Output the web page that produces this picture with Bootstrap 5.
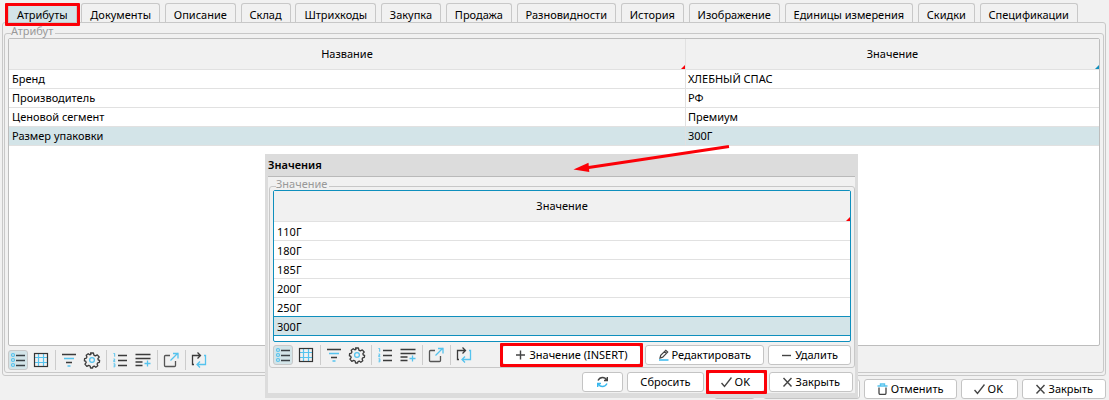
<!DOCTYPE html>
<html lang="ru">
<head>
<meta charset="utf-8">
<meta name="viewport" content="width=device-width, initial-scale=1">
<title>Атрибуты</title>
<link rel="stylesheet" href="https://cdn.jsdelivr.net/npm/bootstrap@5.3.0/dist/css/bootstrap.min.css">
<style>
  :root { --face: #f1f1f1; --edge: #c8c8c8; --line: #e1e1e1; --pick: #d3e4e8; --accent: #0f8fbd; --mark: #fb0007; }
  body { background: var(--face); color: #000; font: 11px/18px "Noto Sans", sans-serif; }
  .screen { min-height: 100vh; padding: 3px 3px 0 2px; }
  .tabs { padding: 0 28px 0 6px; border: 0; }
  .tabs .nav-link { position: relative; height: 19px; padding: 2px 8px 0; line-height: 18px; color: #000; background: var(--face); border: 1px solid var(--edge); border-bottom: 0; border-radius: 3px 3px 0 0; margin: 0; }
  .tabs .nav-link.active { background: var(--pick); color: #000; border-color: var(--edge); }
  .marked { position: relative; }
  .marked::after { content: ""; position: absolute; inset: -3px; border: 3px solid var(--mark); border-radius: 1px; }
  .tabs .marked::after { inset: -1px -4px -4px; }
  .pane { border: 1px solid var(--edge); border-radius: 3px; padding: 6px 1px 2px; }
  .group { border: 1px solid var(--edge); border-radius: 3px; padding: 0 3px 2px; min-width: 0; margin: 0; }
  .group legend { float: none; width: auto; margin: 0 0 0 3px; padding: 0 2px 0 0; font-size: 11px; line-height: 4px; height: 8px; color: #999; }
  .pane .group { padding-top: 1px; }
  .sheet { min-height: calc(100vh - 92px); background: #fff; border: 1px solid #bdbdbd; border-radius: 2px; }
  .sheet table { width: 100%; table-layout: fixed; border-collapse: separate; border-spacing: 0; }
  .sheet th { position: relative; height: 31px; padding: 0; text-align: center; font-weight: 400; background: var(--face); border-bottom: 1px solid var(--line); }
  .sheet th::after { content: ""; position: absolute; right: 0; bottom: 0; border: 2px solid; border-color: transparent var(--tip) var(--tip) transparent; }
  .sheet td { height: 19px; padding: 0 3px 1px; line-height: 17px; border-bottom: 1px solid var(--line); }
  .sheet .split { border-right: 1px solid var(--line); }
  .sheet td.split + td { padding-left: 2px; }
  .wide-col { width: 62.1%; }
  .picked td { background: var(--pick); }
  .tools { gap: 3px; }
  .tools .tool { width: 20px; height: 20px; padding: 0; border: 1px solid transparent; border-radius: 3px; background: none; }
  .tools .tool.on { background: var(--pick); border-color: var(--edge); }
  .tools i { width: 1px; height: 20px; margin-left: 1px; background: #ccc; }
  .tool svg { display: block; width: 18px; height: 18px; }
  .push { height: 20px; padding: 0 12px; gap: 3px; font-size: 11px; line-height: 18px; white-space: nowrap; color: #000; background: #fff; border: 1px solid #c4c4c4; border-radius: 3px; }
  .push svg { width: 11px; height: 12px; flex: none; }
  .w-tiny { width: 41px; }
  .w-save { width: 97px; }
  .w-ok { width: 57px; }
  .actions { padding-top: 3px; }
  .popup { position: absolute; left: 265px; right: 251px; top: 154px; background: var(--face); border: solid #dcdcdc; border-width: 0 3px 5px; }
  .popup h1 { margin: 0; height: 23px; font-size: 11px; font-weight: 600; line-height: 22px; background: #dcdcdc; border-bottom: 1px solid #b9b9b9; }
  .popup .inner { padding: 5px 0 1px 1px; }
  .popup .sheet { min-height: 152px; border-color: var(--accent); }
  .popup .sheet td { padding: 1px 3px 0; }
  .popup .picked td { border-bottom-color: var(--accent); }
  .popup .above td { border-bottom-color: var(--accent); }
  .popup .bar { padding-top: 3px; }
  .popup .foot { padding: 4px 2px 0 0; }
  .pointer { position: absolute; left: 570px; top: 140px; pointer-events: none; }
</style>
<script src="https://cdn.jsdelivr.net/npm/bootstrap@5.3.0/dist/js/bootstrap.bundle.min.js"></script>
</head>
<body>
<svg width="0" height="0" class="position-absolute" aria-hidden="true">
  <defs>
    <symbol id="i-list" viewBox="0 0 18 18" fill="none">
      <g stroke="#55c3ee" stroke-width="1.2"><circle cx="4" cy="4" r="1.5"/><circle cx="4" cy="9" r="1.5"/><circle cx="4" cy="14" r="1.5"/></g>
      <path d="M7 4.5h9M7 9.5h9M7 14.5h9" stroke="#3b4145" stroke-width="1.4"/>
    </symbol>
    <symbol id="i-grid" viewBox="0 0 18 18" fill="none">
      <path d="M6.5 2.5v13M11.5 2.5v13M2.5 6.5h13M2.5 11.5h13" stroke="#55c3ee" stroke-width="1.2"/>
      <rect x="2.5" y="2.5" width="13" height="13" stroke="#333" stroke-width="1.2"/>
    </symbol>
    <symbol id="i-filter" viewBox="0 0 18 18" fill="none" stroke-width="1.3">
      <path d="M2 3.5h14M6 11.5h6" stroke="#3b3b3b"/><path d="M4 7.5h10M7.500 15h3" stroke="#55c3ee"/>
    </symbol>
    <symbol id="i-gear" viewBox="0 0 18 18" fill="none" stroke-width="1.3">
      <path d="M7.600 2h2.800l.5 2.200 1.400.7 2-1 1.900 2.100-1.300 1.700.4 1.300 1.300.3-.2 2-1.700.5-.6 1.200.7 1.700-2 1.600-1.600-1.200-1.200.4-.4 1.500H7.600l-.5-2-1.400-.6-1.900 1-1.900-2.200 1.300-1.600-.5-1.400-1.300-.4.2-2.200 1.700-.4.6-1.200-.7-1.800 2-1.500 1.600 1.100 1.100-.4z" stroke="#3b3b3b" stroke-linejoin="round"/>
      <circle cx="9" cy="9" r="2.400" stroke="#55c3ee"/>
    </symbol>
    <symbol id="i-num" viewBox="0 0 18 18" fill="none" stroke-width="1.3">
      <path d="M7 4.500h9M7 9.500h9M7 14.500h9" stroke="#3b3b3b"/>
      <path d="M2.500 2.500h1.200v3.200M2.500 8h1.200v1.500H2.700v1.200h1.600M2.500 12.800h1.400v3H2.500M2.700 14.300h1" stroke="#55c3ee" stroke-width="1"/>
    </symbol>
    <symbol id="i-add" viewBox="0 0 18 18" fill="none" stroke-width="1.300">
      <path d="M1.500 3.500h15M1.500 7.500h15M1.500 11h7M1.500 14.500h7" stroke="#3b3b3b"/><path d="M10.500 12.500h6M13.500 9.500v6" stroke="#55c3ee"/>
    </symbol>
    <symbol id="i-out" viewBox="0 0 18 18" fill="none" stroke-width="1.300">
      <path d="M8 4.500H3.500a1 1 0 0 0-1 1V14.500a1 1 0 0 0 1 1H12.500a1 1 0 0 0 1-1V10" stroke="#555"/><path d="M8.500 9.500l7.500-7.500M11 2.500h5v5" stroke="#55c3ee"/>
    </symbol>
    <symbol id="i-loop" viewBox="0 0 18 18" fill="none" stroke-width="1.300">
      <path d="M4 13.500H2.500v-9H10M7.500 1.500l3 3-3 3" stroke="#3b3b3b"/><path d="M14 4.500h1.500v9H7M10 10.500l-3 3 3 3" stroke="#55c3ee"/>
    </symbol>
    <symbol id="i-plus" viewBox="0 0 11 12"><path d="M1 6h9M5.500 1.500v9" stroke="#444" stroke-width="1.400"/></symbol>
    <symbol id="i-minus" viewBox="0 0 11 12"><path d="M1 6.500h9" stroke="#444" stroke-width="1.400"/></symbol>
    <symbol id="i-check" viewBox="0 0 11 12"><path d="M.5 7l3 3.500L10.500 1.500" fill="none" stroke="#444" stroke-width="1.400"/></symbol>
    <symbol id="i-cross" viewBox="0 0 11 12"><path d="M1.500 2l8 8.500M9.500 2l-8 8.500" stroke="#444" stroke-width="1.400"/></symbol>
    <symbol id="i-pen" viewBox="0 0 11 12" fill="none"><path d="M2 9l.7-2.700L7.800 1.300l1.900 1.800L4.700 8.200zM6.500 2.700l1.800 1.700" stroke="#444" stroke-width="1.200"/><path d="M1 11h9.500" stroke="#39b8ee" stroke-width="1.500"/></symbol>
    <symbol id="i-bin" viewBox="0 0 11 12" fill="none"><path d="M2 4.500V10q0 1.500 1.500 1.500h4Q9 11.500 9 10V4.500" stroke="#444" stroke-width="1.300"/><path d="M.5 3h10M3.500 3V1h4v2" stroke="#55c3ee" stroke-width="1.400"/></symbol>
    <symbol id="i-sync" viewBox="0 0 11 12" fill="none" stroke-width="1.400"><path d="M1 4.500Q2.500 1.500 5.500 1.500T9.500 4M10.300 1v3.500H7" stroke="#444"/><path d="M10 7.500Q8.500 10.500 5.500 10.500T1.500 8M.7 11V7.500H4" stroke="#39b8ee"/></symbol>
  </defs>
</svg>

<main class="screen d-flex flex-column position-relative">
  <nav class="nav nav-tabs tabs flex-nowrap justify-content-between text-nowrap">
    <a class="nav-link active marked" href="#attr">Атрибуты</a>
    <a class="nav-link" href="#docs">Документы</a>
    <a class="nav-link" href="#desc">Описание</a>
    <a class="nav-link" href="#stock">Склад</a>
    <a class="nav-link" href="#codes">Штрихкоды</a>
    <a class="nav-link" href="#buy">Закупка</a>
    <a class="nav-link" href="#sell">Продажа</a>
    <a class="nav-link" href="#kinds">Разновидности</a>
    <a class="nav-link" href="#history">История</a>
    <a class="nav-link" href="#image">Изображение</a>
    <a class="nav-link" href="#units">Единицы измерения</a>
    <a class="nav-link" href="#sales">Скидки</a>
    <a class="nav-link" href="#specs">Спецификации</a>
  </nav>

  <section class="pane" id="attr">
    <fieldset class="group">
      <legend>Атрибут</legend>
      <div class="sheet">
        <table>
          <colgroup><col class="wide-col"><col></colgroup>
          <thead><tr><th class="split" style="--tip:#fb0007">Название</th><th style="--tip:#0f8fbd">Значение</th></tr></thead>
          <tbody>
            <tr><td class="split">Бренд</td><td>ХЛЕБНЫЙ СПАС</td></tr>
            <tr><td class="split">Производитель</td><td>РФ</td></tr>
            <tr><td class="split">Ценовой сегмент</td><td>Премиум</td></tr>
            <tr class="picked"><td class="split">Размер упаковки</td><td>300Г</td></tr>
          </tbody>
        </table>
      </div>
      <div class="tools d-flex mt-1">
        <button type="button" class="tool on" aria-label="Таблица"><svg><use href="#i-list"/></svg></button>
        <button type="button" class="tool" aria-label="Сетка"><svg><use href="#i-grid"/></svg></button>
        <i></i>
        <button type="button" class="tool" aria-label="Фильтр"><svg><use href="#i-filter"/></svg></button>
        <button type="button" class="tool" aria-label="Настройки"><svg><use href="#i-gear"/></svg></button>
        <i></i>
        <button type="button" class="tool" aria-label="Нумерация"><svg><use href="#i-num"/></svg></button>
        <button type="button" class="tool" aria-label="Добавить"><svg><use href="#i-add"/></svg></button>
        <i></i>
        <button type="button" class="tool" aria-label="Открыть"><svg><use href="#i-out"/></svg></button>
        <i></i>
        <button type="button" class="tool" aria-label="Обновить"><svg><use href="#i-loop"/></svg></button>
      </div>
    </fieldset>
  </section>

  <div class="actions d-flex justify-content-end gap-1">
    <button type="button" class="btn push w-tiny me-1" aria-label="Обновить"></button>
    <button type="button" class="btn push w-save" aria-label="Сохранить"></button>
    <button type="button" class="btn push d-flex align-items-center"><svg><use href="#i-bin"/></svg>Отменить</button>
    <button type="button" class="btn push w-ok d-flex align-items-center"><svg><use href="#i-check"/></svg>OK</button>
    <button type="button" class="btn push d-flex align-items-center"><svg><use href="#i-cross"/></svg>Закрыть</button>
  </div>

  <section class="popup" role="dialog" aria-labelledby="popup-title">
    <h1 id="popup-title">Значения</h1>
    <div class="inner">
      <fieldset class="group">
        <legend>Значение</legend>
        <div class="sheet">
          <table>
            <thead><tr><th style="--tip:#fb0007">Значение</th></tr></thead>
            <tbody>
              <tr><td>110Г</td></tr>
              <tr><td>180Г</td></tr>
              <tr><td>185Г</td></tr>
              <tr><td>200Г</td></tr>
              <tr class="above"><td>250Г</td></tr>
              <tr class="picked"><td>300Г</td></tr>
            </tbody>
          </table>
        </div>
        <div class="bar d-flex justify-content-between">
          <div class="tools d-flex">
            <button type="button" class="tool on" aria-label="Таблица"><svg><use href="#i-list"/></svg></button>
            <button type="button" class="tool" aria-label="Сетка"><svg><use href="#i-grid"/></svg></button>
            <i></i>
            <button type="button" class="tool" aria-label="Фильтр"><svg><use href="#i-filter"/></svg></button>
            <button type="button" class="tool" aria-label="Настройки"><svg><use href="#i-gear"/></svg></button>
            <i></i>
            <button type="button" class="tool" aria-label="Нумерация"><svg><use href="#i-num"/></svg></button>
            <button type="button" class="tool" aria-label="Добавить"><svg><use href="#i-add"/></svg></button>
            <i></i>
            <button type="button" class="tool" aria-label="Открыть"><svg><use href="#i-out"/></svg></button>
            <i></i>
            <button type="button" class="tool" aria-label="Обновить"><svg><use href="#i-loop"/></svg></button>
          </div>
          <div class="d-flex gap-1">
            <button type="button" class="btn push marked d-flex align-items-center"><svg><use href="#i-plus"/></svg>Значение (INSERT)</button>
            <button type="button" class="btn push d-flex align-items-center"><svg><use href="#i-pen"/></svg>Редактировать</button>
            <button type="button" class="btn push d-flex align-items-center"><svg><use href="#i-minus"/></svg>Удалить</button>
          </div>
        </div>
      </fieldset>
      <div class="foot d-flex justify-content-end gap-1">
        <button type="button" class="btn push w-tiny d-flex align-items-center justify-content-center" aria-label="Обновить"><svg><use href="#i-sync"/></svg></button>
        <button type="button" class="btn push">Сбросить</button>
        <button type="button" class="btn push w-ok marked d-flex align-items-center"><svg><use href="#i-check"/></svg>OK</button>
        <button type="button" class="btn push d-flex align-items-center"><svg><use href="#i-cross"/></svg>Закрыть</button>
      </div>
    </div>
  </section>

  <svg class="pointer" width="165" height="36" viewBox="0 0 165 36" aria-hidden="true">
    <path d="M17 27.800L159 6.500" stroke="#fb0007" stroke-width="3"/>
    <path d="M3.500 29.500L18.500 22.800l.8 9.200z" fill="#fb0007"/>
  </svg>
</main>
</body>
</html>
